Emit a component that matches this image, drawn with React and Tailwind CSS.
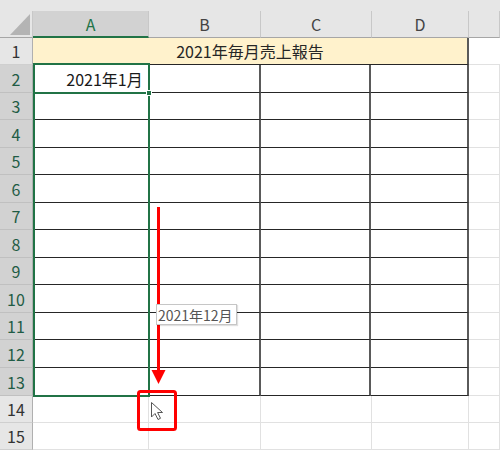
import React from "react";

const GREEN = "#217346";
const colW = [116, 112, 111, 97, 31];
const colLabels = ["A", "B", "C", "D", ""];
const rowH = [27, 28, 27, 28, 27, 28, 27, 28, 27, 28, 27, 28, 28, 27, 27];

function HeaderRow() {
  return (
    <div className="flex h-[27px]">
      <div className="relative w-[33px] h-full border-r border-b border-r-[#c8c8c8] border-b-[#a6a6a6] bg-[#e6e6e6]">
        <svg className="absolute left-0 top-0" width="33" height="27" viewBox="0 0 33 27">
          <polygon points="10,24 30,3 30,24" fill="#b4b4b4" />
        </svg>
      </div>
      {colW.map((w, i) => (
        <div
          key={i}
          style={{ width: w }}
          className={
            i === 0
              ? "h-full flex items-center justify-center bg-[#d2d2d2] border-r border-r-[#c8c8c8] border-b-2 border-b-[#217346] text-[#217346] text-[16px] leading-none pt-[1px]"
              : "h-full flex items-center justify-center bg-[#e6e6e6] border-r border-r-[#c8c8c8] border-b border-b-[#a6a6a6] text-[#444] text-[16px] leading-none"
          }
        >
          {colLabels[i]}
        </div>
      ))}
    </div>
  );
}

function RowHeader({ n, h }) {
  const sel = n >= 2 && n <= 13;
  return (
    <div
      style={{ height: h }}
      className={
        sel
          ? "w-[33px] shrink-0 flex items-center justify-center bg-[#d2d2d2] border-r border-r-[#b0b0b0] border-b border-b-[#c0c0c0] text-[#1f5c45] text-[16px] leading-none"
          : "w-[33px] shrink-0 flex items-center justify-center bg-[#e6e6e6] border-r border-r-[#b0b0b0] border-b border-b-[#cfcfcf] text-[#333] text-[16px] leading-none"
      }
    >
      {n}
    </div>
  );
}

function Row({ n, h }) {
  if (n === 1) {
    return (
      <div className="flex" style={{ height: h }}>
        <RowHeader n={n} h={h} />
        <div className="w-[436px] h-full flex items-center justify-center bg-[#fff2cc] border-r-2 border-r-[#5a5a5a] border-b border-b-[#262626] text-[#262626] text-[16px] leading-none">
          2021年毎月売上報告
        </div>
        <div className="w-[31px] h-full border-b border-b-[#e1e1e1]" />
      </div>
    );
  }
  const inTable = n <= 13;
  return (
    <div className="flex" style={{ height: h }}>
      <RowHeader n={n} h={h} />
      {colW.map((w, i) => {
        const dark = inTable && i < 4;
        let cls = "h-full ";
        if (dark) {
          cls += "border-b border-b-[#262626] ";
          cls += i === 0 ? "border-r border-r-[#262626] " : "border-r-2 border-r-[#5a5a5a] ";
        } else {
          cls += "border-b border-b-[#e1e1e1] border-r border-r-[#e1e1e1] ";
        }
        return (
          <div key={i} style={{ width: i === 3 && dark ? w + 1 : i === 4 && dark ? w - 1 : w }} className={cls + "flex items-center justify-end pr-[5px] text-[16px] leading-none text-[#1a1a1a]"}>
            {n === 2 && i === 0 ? "2021年1月" : ""}
          </div>
        );
      })}
    </div>
  );
}

export default function App() {
  return (
    <div className="relative w-[500px] h-[450px] overflow-hidden bg-white font-['Noto_Sans_CJK_JP','Noto_Sans',sans-serif]">
      <div className="h-[11px] bg-[#e6e6e6]" />
      <HeaderRow />
      {rowH.map((h, i) => (
        <Row key={i} n={i + 1} h={h} />
      ))}

      {/* selection range */}
      <div className="absolute left-[33px] top-[63px] w-[117px] h-[334px] border-2 border-[#217346]" />
      {/* active cell */}
      <div className="absolute left-[33px] top-[63px] w-[117px] h-[31px] border-2 border-[#217346]" />
      {/* fill handle */}
      <div className="absolute left-[146px] top-[90px] w-[6px] h-[6px] bg-[#217346] border border-white" />

      {/* red arrow */}
      <svg className="absolute left-0 top-0" width="500" height="450" viewBox="0 0 500 450">
        <rect x="157" y="207" width="3" height="166" fill="#ff0000" />
        <polygon points="151.5,370 165.5,370 158.5,384" fill="#ff0000" />
        <rect x="138.5" y="391.5" width="37" height="38" rx="2" fill="none" stroke="#ff0000" strokeWidth="3" />
        {/* cursor */}
        <path
          d="M151.5 402.5 L151.5 417 L155 413.5 L158 419.5 L160.5 418.3 L157.6 412.5 L162.5 412.5 Z"
          fill="#ffffff"
          stroke="#555"
          strokeWidth="1"
          strokeLinejoin="round"
        />
      </svg>

      {/* tooltip */}
      <div className="absolute left-[156px] top-[304px] w-[81px] h-[21px] bg-white border border-[#c6c6c6] shadow-[1px_1px_1px_rgba(0,0,0,0.12)] flex items-center pl-[1px] text-[14px] leading-none text-[#555]">
        2021年12月
      </div>
    </div>
  );
}
